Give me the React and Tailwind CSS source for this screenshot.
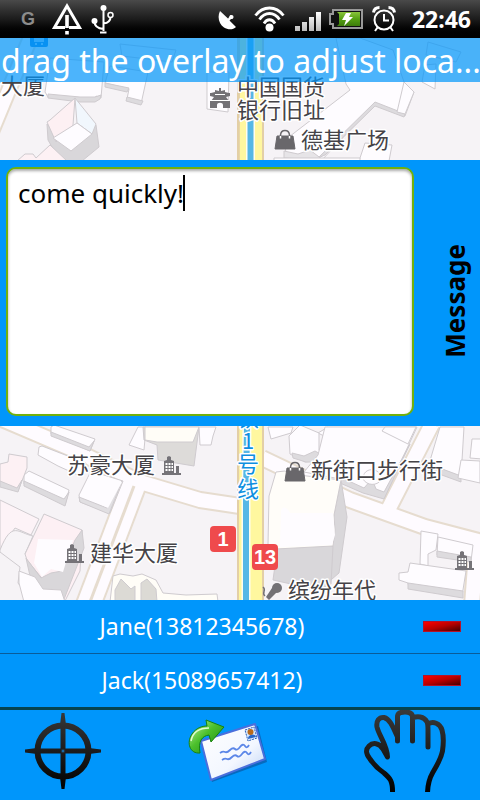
import React, { useState } from "react";

const people = [
  { name: "Jane", phone: "13812345678" },
  { name: "Jack", phone: "15089657412" },
];

function StatusBar() {
  return (
    <header className="flex h-[38px] items-center justify-between bg-linear-to-b from-[#4a4a4a] via-[#1c1c1c] to-black pr-[9px] pl-[21px] text-white">
      <div className="flex items-center">
        <span className="w-[30px] text-lg leading-none font-bold text-[#8c8c8c] [font-family:'Liberation_Sans',Arial,sans-serif]">G</span>
        <svg className="mr-2 h-8 w-8" viewBox="0 0 32 32" fill="none" aria-hidden="true">
          <path d="M14 24.500H3.500L16 3l12.500 21.500H18" stroke="#fff" strokeWidth="3" />
          <path d="M14.200 12h3.600v13h-3.600zM14.200 28h3.600v3.500h-3.600z" fill="#fff" />
        </svg>
        <svg className="h-[30px] w-6" viewBox="0 0 24 30" fill="none" stroke="#fff" strokeWidth="2" aria-hidden="true">
          <path d="M12.500 4v23M3.500 17.500c0 4 3 7 9 7.500M19.500 13c0 4-2.500 6-7 6.500" />
          <circle cx="12.500" cy="4" r="3" fill="#fff" stroke="none" />
          <circle cx="3.500" cy="17" r="3" fill="#fff" stroke="none" />
          <circle cx="19.500" cy="11" r="2.500" strokeWidth="1.500" />
          <path d="M9 28.500h6.500" />
        </svg>
      </div>
      <div className="flex items-center">
        <svg className="mr-4 h-6 w-5 translate-y-[2px]" viewBox="0 0 20 24" aria-hidden="true">
          <path d="M2 2C-1 8 1 15 6 18.500c4 2.500 9 2.500 12-.5L11.500 11.500l1.500-1.500c3 .5 3.500-4 .5-4-2.500-.5-2 2.500-3.500 3.500z" fill="#fff" />
        </svg>
        <svg className="mr-[10px] h-7 w-[31px]" viewBox="0 0 31 28" fill="none" stroke="#fff" strokeWidth="2.800" aria-hidden="true">
          <path d="M1.500 10.500C9 .500 22 .500 29.500 10.500M5.500 14.500c5.500-8 14.500-8 20 0M10 18.500c3-5 8-5 11 0" />
          <circle cx="15.500" cy="22.500" r="4" fill="#fff" stroke="none" />
        </svg>
        <svg className="mr-2 h-5 w-[26px] translate-y-[2px]" viewBox="0 0 26 20" aria-hidden="true">
          <defs>
            <linearGradient id="bars" x2="0" y2="1">
              <stop stopColor="#fff" />
              <stop offset="1" stopColor="#bbb" />
            </linearGradient>
          </defs>
          <path d="M0 15h5v5H0zM7 11h5v9H7zM14 6h5v14h-5zM21 1h5v19h-5z" fill="url(#bars)" />
        </svg>
        <svg className="mr-[9px] h-5 w-[34px]" viewBox="0 0 34 20" aria-hidden="true">
          <defs>
            <linearGradient id="charge" x2="0" y2="1">
              <stop stopColor="#8ac43c" />
              <stop offset=".5" stopColor="#55a012" />
              <stop offset="1" stopColor="#3d7d0b" />
            </linearGradient>
          </defs>
          <path d="M4 1h29v18H4v-4H1V5h3z" fill="#111" stroke="#999" strokeWidth="2" />
          <path d="M8 3h23v14H8l2-2V5z" fill="url(#charge)" />
          <path d="M17 4h5l-2 4h4l-9 9 2-6h-4z" fill="#fff" />
        </svg>
        <svg className="mr-4 h-[26px] w-6" viewBox="0 0 24 26" fill="none" stroke="#fff" strokeWidth="2" aria-hidden="true">
          <circle cx="12" cy="14" r="9.500" />
          <path d="M12 8v6.500h5M5.500 21.500 3 25M18.500 21.500 21 25" />
          <path d="M1.500 6.500C2 3 4.500 1.500 7.500 1.500M22.500 6.500C22 3 19.500 1.500 16.500 1.500" strokeWidth="3" />
        </svg>
        <time className="text-[23px] leading-none font-bold">22:46</time>
      </div>
    </header>
  );
}

function Tower({ x, y }) {
  return (
    <g transform={`translate(${x} ${y})`}>
      <path d="M0 19v-2h2V5l3-1V1l2-1 2 1v3l3 1v12h2V10h3v7h2v2z" fill="#757378" />
      <path d="M3.500 7h2v2h-2zM6.500 7h2v2h-2zM9.500 7h1.500v2H9.500zM3.500 10h2v2h-2zM6.500 10h2v2h-2zM9.500 10h1.500v2H9.500zM3.500 13h2v2h-2zM6.500 13h2v2h-2zM9.500 13h1.500v2H9.500z" fill="#fff" />
    </g>
  );
}

function Bag({ x, y }) {
  return (
    <g transform={`translate(${x} ${y})`}>
      <path d="M2 7h16l2 13H0z" fill="#69676b" stroke="#69676b" strokeLinejoin="round" />
      <path d="M5.500 9V6C6 0 14 0 14.500 6v3" fill="none" stroke="#69676b" strokeWidth="1.500" />
      <path d="M5.500 7v2.500M14.500 7v2.500" stroke="#fff" strokeWidth="1.500" />
    </g>
  );
}

function Map() {
  return (
    <svg className="absolute inset-0 h-full w-full" viewBox="0 38 480 562" preserveAspectRatio="xMidYMin slice" role="img" aria-label="Map">
      <rect y="38" width="480" height="562" fill="#f6f3f6" />

      {/* streets */}
      <g fill="none" strokeLinejoin="round">
        <path d="M-14 145 32 34" stroke="#e6dccf" strokeWidth="17" />
        <path d="M-14 145 32 34" stroke="#fefbff" strokeWidth="13" />
        <g stroke="#e6dccf" strokeWidth="18">
          <path d="M-5 416 70 448 140 482 200 500 240 506" />
          <path d="M135 482 88 606" strokeWidth="27" />
          <path d="M262 458 350 500 425 527 490 544M388 510 432 424" />
          <path d="M477 540 472 605" />
        </g>
        <g stroke="#fefbff" strokeWidth="14">
          <path d="M-5 416 70 448 140 482 200 500 240 506" />
          <path d="M135 482 88 606" strokeWidth="23" />
          <path d="M262 458 350 500 425 527 490 544M388 510 432 424" />
          <path d="M477 540 472 605" />
        </g>
        <path d="M134 486 90 602" stroke="#e6dccf" strokeWidth="3" />
      </g>

      {/* blocks north of the message */}
      <g stroke="#cfcbcf" strokeWidth="1" fill="#fefcff">
        <path d="M45 92 50 58 104 62 101 98 96 96 95 101 48 97z" />
        <path d="M48 94 80 97 95 97 101 95 100 99 95 102 80 102 48 98z" fill="#dddbde" />
        <path d="M105 83 110 66 148 72 141 104 127 99 129 89z" />
        <path d="M105 83 129 88 127 92 105 87zM127 97 143 101 141 105 126 101z" fill="#dddbde" />
        <path d="M120 44 176 50 172 62 122 56z" fill="#f3f3f7" />
        <path d="M47 124 70 150 96 125 99 147 82 161 60 161 48 140z" fill="#d9d7da" />
        <path d="M47 122 50 120 75 98 73 125 56 142z" fill="#fdf0f3" />
        <path d="M75 98 96 124 92 134 77 123z" fill="#f1f7fd" />
        <path d="M77 123 92 134 71 151 53 138z" />
        <path d="M17 161 25 154 33 154 36 158 50 145 67 161z" fill="#fdf1f4" />
        <path d="M207 72 229 72 228 112 207 109z" />
        <path d="M336 38 360 38 393 50 404 82 414 92 405 116 397 113 375 103 321 161 286 157 285 140 350 90 346 84z" />
        <path d="M375 102 398 111 405 114 404 117 375 106 325 155 318 158z" fill="#dddbde" />
        <path d="M404 82 414 92 405 114 397 112z" />
        <path d="M284 151 298 154 310 150 323 160 284 158z" fill="#e6e4e7" />
        <path d="M428 42 461 52 456 62 426 55z" fill="#eef3f8" />
        <path d="M422 82 425 65 436 64 435 89z" />
        <path d="M359 161 365 143 392 145 389 161z" />
        <path d="M274 161V158h86v3z" />
      </g>

      {/* blocks south of the message */}
      <g stroke="#cfcbcf" strokeWidth="1" fill="#fefcff">
        <path d="M51 427 54 425 95 439 90 451 51 434z" />
        <path d="M51 432 89 447 94 441 90 451 51 436z" fill="#dddbde" />
        <path d="M39 447 42 446 86 463 80 476 58 466 38 455z" />
        <path d="M24 475 29 471 69 490 65 505 24 484z" />
        <path d="M24 481 64 499 69 492 65 506 24 486z" fill="#dddbde" />
        <path d="M0 464 8 462 9 454 27 457 27 468 18 491 0 485z" fill="#fdf1f4" />
        <path d="M0 481 17 488 22 480 18 492 0 487z" fill="#dddbde" />
        <path d="M79 495 91 471 123 481 110 513 80 502z" />
        <path d="M79 497 107 508 122 481 109 514 80 502z" fill="#e1dfe2" />
        <path d="M81 495 91 472 122 482 108 508z" stroke="none" />
        <path d="M0 500 39 519 31 535 15 528 8 538 0 550z" fill="#fdf3f7" />
        <path d="M0 550C12 520 18 533 33 536L25 554 43 565 62 595 58 602H32L18 583 20 567 0 552z" fill="#f7f4f7" />
        <path d="M25 554 44 514 82 530 80 571 65 601 40 576 27 560z" fill="#fdf0f4" />
        <path d="M26 558 41 578 51 573 62 571 75 540 82 530 84 548 63 602 42 592 30 576z" fill="#d9d7da" />
        <path d="M38 539 73 540 63 572 51 569 42 577 34 563z" stroke="none" />
        <path d="M19 571 35 577 43 589 61 590 65 602H24L19 583z" />
        <path d="M129 445 138 427 146 427 144 450z" />
        <path d="M143 427H199L194 466 158 460 157 445 144 440z" fill="#dddbd9" />
        <path d="M145 427H199L193 442 157 442 145 440z" fill="#fffdf7" />
        <path d="M199 427H216L213 436 211 445 200 445z" />
        <path d="M110 602 113 576 120 574 133 576 142 574 156 580 163 593 186 595 217 594 218 602z" fill="#fffdf7" />
        <path d="M115 602V590l6-11 10 10 4-3v16zM141 602v-19l6-4 9 10 1 13z" fill="#dcdad5" />
        <path d="M268 427h25l-2 6-20 6zM328 427 324 436 318 433z" />
        <path d="M289 436 300 425 319 433 319 450 326 460 305 462 290 454z" />
        <path d="M292 453 304 456 315 451 326 457 325 462 306 462 293 458z" fill="#dddbde" />
        <path d="M325 427H417L384 498 340 479 304 472 318 455z" />
        <path d="M340 477 364 488 372 479 376 489 384 492 410 444 384 499 363 493 340 483z" fill="#dddbde" />
        <path d="M363 479c0-14 20-11 18 1-4 6-14 6-18-1z" />
        <path d="M385 427 382 431 408 444 416 427z" />
        <path d="M440 427H464L461 477 429 464z" />
        <path d="M429 464 461 476 461 482 428 470z" fill="#dddbde" />
        <path d="M461 460 480 461V483L458 478zM472 439h10v20l-12-1z" />
        <path d="M341 480 347 517 339 573 325 585 333 520z" fill="#d9d7da" />
        <path d="M278 544 333 546 331 584 318 590 273 580z" fill="#d9d7da" />
        <path d="M269 496 276 472 285 471 290 474 341 480 334 515 335 530 333 546 276 549 268 545z" fill="#fffdf9" />
        <path d="M281 512C282 504 288 508 290 513H333L335 535 332 545 280 547z" stroke="none" />
        <path d="M421 531 438 534 436 550 428 554 428 566 420 564z" />
        <path d="M438 537 473 545 471 561 437 555z" />
        <path d="M437 551 471 557 471 562 437 557z" fill="#dddbde" />
        <path d="M399 573 408 572 410 563 466 571 462 596 409 588 408 583 399 580z" />
        <path d="M408 583 463 591 463 598 408 589z" fill="#dddbde" />
      </g>

      {/* metro line 1 */}
      <path d="M237 38H264V600H237z" fill="#e3cfa6" />
      <path d="M240 38H262V600H239z" fill="#fff79f" />
      <path d="M250.500 38V160L246 500V600" fill="none" stroke="#fffdf0" strokeWidth="9" />
      <path d="M250.500 38V160L246 500V600" fill="none" stroke="#56b7e6" strokeWidth="6" />

      {/* bus stop */}
      <rect x="30" y="30" width="18" height="17" rx="2" fill="#1c86dc" />
      <path d="M34 34h10v8H34zM35 43h2v2h-2zM41 43h2v2h-2z" fill="#9fd1f7" />

      {/* points of interest */}
      <path d="M210 108v-7h1l3-4-4-1v-3h1l4-1v-2l4 1v-3h2v3l4-1v2l4 1h1v3l-4 1 3 4h1v7h-7v-3c0-3-6-3-6 0v3z" fill="#737175" />
      <path d="M215 94.500h10M211 100.500h18" stroke="#fff" strokeWidth="1" />
      <Bag x={275} y={129} />
      <Bag x={285} y={461} />
      <Tower x={162} y={456} />
      <Tower x={65} y={544} />
      <Tower x={455} y={551} />
      <path d="M266 597 272 588l5-1 1 4-9 9z" fill="#737175" />
      <circle cx="277" cy="588" r="5" fill="#737175" />
      <path d="M263 587c4 3-2 6 2 9" fill="none" stroke="#737175" strokeWidth="1.500" />

      <g className="text-[22px] [font-family:'Noto_Sans_CJK_SC',sans-serif]" fill="#454347" stroke="#fff" strokeWidth="3" paintOrder="stroke" strokeLinejoin="round">
        <text x="-21" y="94">金大厦</text>
        <text x="237" y="95">中国国货</text>
        <text x="237" y="118">银行旧址</text>
        <text x="301" y="148">德基广场</text>
        <text x="67" y="473">苏豪大厦</text>
        <text x="90" y="561">建华大厦</text>
        <text x="311" y="478">新街口步行街</text>
        <text x="288" y="598">缤纷年代</text>
        <g fill="#0f8fe0" textAnchor="middle">
          <text x="248" y="426">铁</text>
          <text x="248" y="449">1</text>
          <text x="248" y="472">号</text>
          <text x="248" y="497">线</text>
        </g>
      </g>

      <g className="text-[20px] font-bold [font-family:'Liberation_Sans',Arial,sans-serif]" textAnchor="middle">
        <rect x="210" y="526" width="26" height="26" rx="4" fill="#ef4a4c" />
        <text x="223" y="546" fill="#fff">1</text>
        <rect x="252" y="544" width="26" height="26" rx="4" fill="#ef4a4c" />
        <text x="265" y="564" fill="#fff">13</text>
      </g>
    </svg>
  );
}

function CrosshairIcon() {
  return (
    <svg className="h-[78px] w-[78px]" viewBox="0 0 78 78" aria-hidden="true">
      <defs>
        <linearGradient id="ink" gradientUnits="userSpaceOnUse" x1="0" y1="0" x2="0" y2="78">
          <stop stopColor="#383838" />
          <stop offset="1" stopColor="#000" />
        </linearGradient>
      </defs>
      <circle cx="39" cy="39" r="25.500" fill="none" stroke="url(#ink)" strokeWidth="6" />
      <path d="M37.500 1h3L42 13 41.500 16V62L42 65 40.500 77h-3L36 65 36.500 62V16L36 13z" fill="url(#ink)" />
      <path d="M1 37.500v3L13 42 16 41.500H62L65 42 77 40.500v-3L65 36 62 36.500H16L13 36z" fill="url(#ink)" />
      <circle cx="39" cy="39" r="2" fill="#1a6aa5" stroke="#222" />
    </svg>
  );
}

function SendIcon() {
  return (
    <svg className="h-16 w-20" viewBox="0 0 80 64" aria-hidden="true">
      <defs>
        <linearGradient id="paper" x2="1" y2="1">
          <stop stopColor="#fff" />
          <stop offset=".6" stopColor="#f3f7ff" />
          <stop offset="1" stopColor="#bcd2f5" />
        </linearGradient>
        <linearGradient id="leaf" x2="1" y2="1">
          <stop stopColor="#c9f5a6" />
          <stop offset=".45" stopColor="#4cc02c" />
          <stop offset="1" stopColor="#17820d" />
        </linearGradient>
      </defs>
      <path d="M15 24 70 7l9 36-55 20z" fill="#0b4d96" opacity=".6" />
      <path d="M13 22 67 5l10 35-54 21z" fill="url(#paper)" stroke="#4a6fdc" strokeWidth="2" strokeLinejoin="round" />
      <path d="M57 11 66 8l3 11-9 3z" fill="#d5e8ff" stroke="#2b5fb8" strokeDasharray="2 1" />
      <path d="M60 20c0-5 7-6 8-2z" fill="#2766ca" />
      <circle cx="62.500" cy="13" r="3" fill="#b96a1c" />
      <path d="M32 34q3-2 5-1t5-2 5-1 5-2 5-1 4-1M34 41q3-2 5-1t5-2 5-1 5-2 5-1 4-1" fill="none" stroke="#5b86e8" strokeWidth="1.800" />
      <path d="M12 34C2 35-2 24 4 15 8 9 14 7 19 7L18 1 36 8 23 23 21 16C14 17 10 22 12 34z" fill="url(#leaf)" stroke="#17820d" strokeWidth="1" strokeLinejoin="round" />
      <path d="M3 22C5 12 13 9 21 9" fill="none" stroke="#e2fcd0" strokeWidth="1.500" />
    </svg>
  );
}

function HandIcon() {
  return (
    <svg className="h-[82px] w-[82px]" viewBox="0 0 82 82" fill="none" aria-hidden="true">
      <defs>
        <linearGradient id="palm" gradientUnits="userSpaceOnUse" x1="0" y1="0" x2="0" y2="82">
          <stop stopColor="#3a3a3a" />
          <stop offset="1" stopColor="#000" />
        </linearGradient>
      </defs>
      <path
        d="M28.500 84C29 71 26 68 20 63 14 59 10 55 6 49 2 44 1 40 5 36 9 32 15 33 19 39L23.500 47C23 34 15 26 13 17 12 11 15 7 20 7.500 26 9 29 17 33.500 27M33.500 31V6C34 2 38 2 41 2 45 2 48.500 3 48.500 7V31M48.500 8C53 6 60 6 63 12 64 14 64 17 64 20V37M64 14C69 11 76 13 78 20 80 27 79.500 34 78.500 41 77 49 72 57 69 62 65 69 63.500 74 63.500 84"
        stroke="url(#palm)"
        strokeWidth="5"
        strokeLinecap="round"
        strokeLinejoin="round"
      />
    </svg>
  );
}

export default function App() {
  const [message, setMessage] = useState("come quickly!");
  const [recipients, setRecipients] = useState(people);
  return (
    <div className="flex min-h-screen flex-col bg-black [font-family:'Noto_Sans','Noto_Sans_CJK_SC',sans-serif]">
      <StatusBar />

      <main className="relative flex-1 overflow-hidden">
        <Map />
        <h1 className="relative h-11 overflow-hidden bg-[#0096fb]/70 px-px text-[32px] leading-[46px] whitespace-nowrap text-white">
          drag the overlay to adjust loca...
        </h1>
        <section className="relative mt-[78px] mb-[174px] flex h-[266px] bg-[#0096fb] py-[7px] pl-[6px]">
          <div className="relative flex-1">
            <textarea
              id="message"
              value={message}
              onChange={(e) => setMessage(e.target.value)}
              className="block h-[249px] w-full resize-none rounded-[10px] border-2 border-[#72b00c] bg-white px-[10px] pt-[6px] text-[26px] leading-9 text-black shadow-[inset_0_2px_3px_#aaa] outline-none"
            />
            <span className="absolute top-2 left-[177px] h-9 w-[2px] bg-black" />
          </div>
          <label htmlFor="message" className="flex w-[66px] items-center justify-center pt-4 pl-4 text-[26px] leading-8 font-bold text-black">
            <span className="rotate-180 [writing-mode:vertical-rl]">Message</span>
          </label>
        </section>
      </main>

      <ul className="bg-[#0096fb] text-white">
        {recipients.map((p) => (
          <li key={p.phone} className="flex h-[54px] items-center border-b border-[#0a5c99] last:h-[53px] last:border-b-0">
            <span className="flex-1 text-center text-[23px]">{`${p.name}(${p.phone})`}</span>
            <button
              type="button"
              aria-label={`Remove ${p.name}`}
              onClick={() => setRecipients(recipients.filter((r) => r !== p))}
              className="flex h-full w-[76px] items-center justify-center"
            >
              <span className="h-[11px] w-[38px] border border-[#b3122a] bg-linear-to-br from-[#ff0000] via-[#b80000] to-[#4a0000]" />
            </button>
          </li>
        ))}
      </ul>

      <nav className="flex h-[93px] border-t-3 border-[#06434f] bg-[#0096fb] pb-2">
        <button type="button" aria-label="Locate me" className="flex flex-[21] items-center justify-center">
          <CrosshairIcon />
        </button>
        <button type="button" aria-label="Send" className="flex flex-[34] items-center justify-center">
          <SendIcon />
        </button>
        <button type="button" aria-label="Drag" className="flex flex-[25] items-center justify-center">
          <HandIcon />
        </button>
      </nav>
    </div>
  );
}
